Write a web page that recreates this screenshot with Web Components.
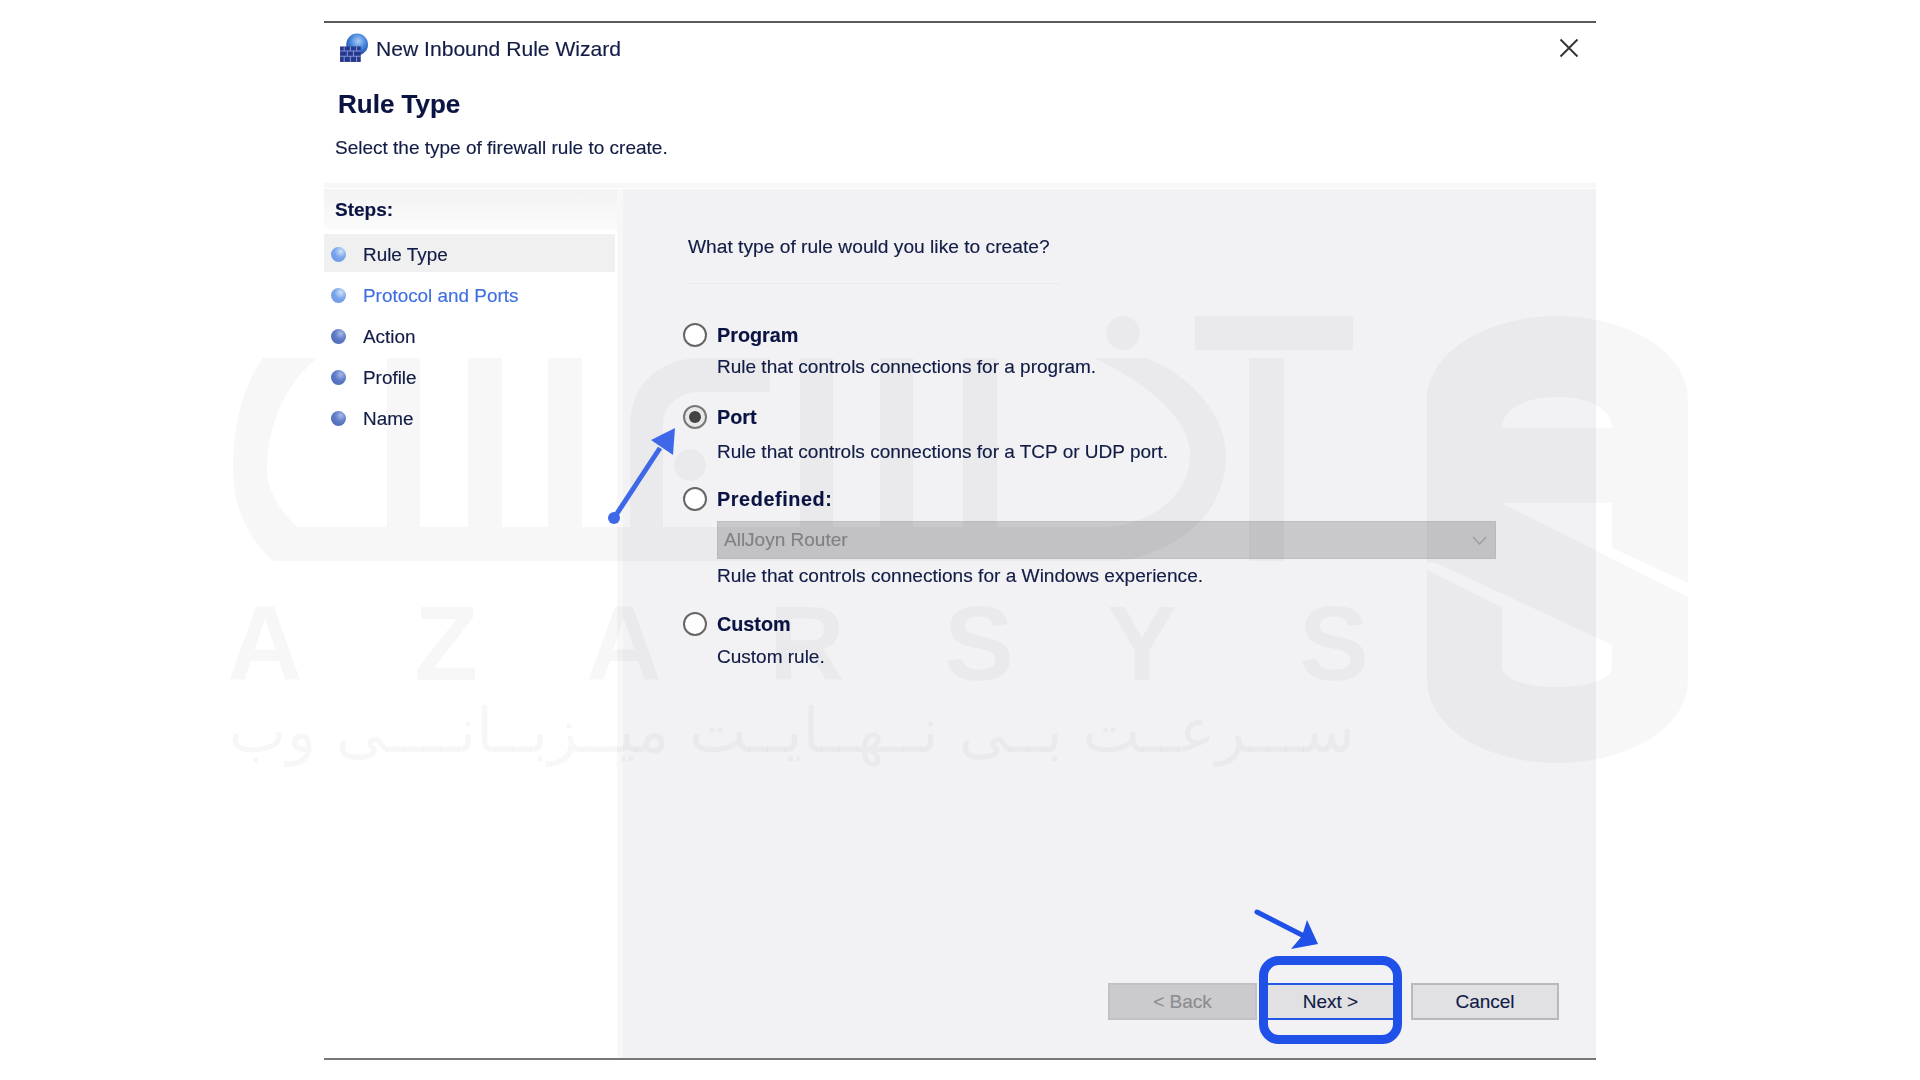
<!DOCTYPE html>
<html lang="en">
<head>
<meta charset="utf-8">
<title>New Inbound Rule Wizard</title>
<style>
  html, body { margin: 0; padding: 0; background: #fff; }
  body { width: 1920px; height: 1080px; overflow: hidden; position: relative; font-family: "Liberation Sans", Arial, sans-serif; }
</style>
</head>
<body>
<wizard-window>
  <wizard-title slot="title">New Inbound Rule Wizard</wizard-title>
  <wizard-head slot="head" heading="Rule Type">Select the type of firewall rule to create.</wizard-head>
  <wizard-steps slot="steps">
    <wizard-step state="current">Rule Type</wizard-step>
    <wizard-step state="next">Protocol and Ports</wizard-step>
    <wizard-step>Action</wizard-step>
    <wizard-step>Profile</wizard-step>
    <wizard-step>Name</wizard-step>
  </wizard-steps>
  <wizard-pane slot="pane" question="What type of rule would you like to create?">
    <rule-option label="Program" style="--desc-gap:8px">Rule that controls connections for a program.</rule-option>
    <rule-option label="Port" checked style="margin-top:26px;--desc-gap:11px">Rule that controls connections for a TCP or UDP port.</rule-option>
    <rule-option label="Predefined:" style="margin-top:23px;--desc-gap:5px;--label-ls:.6px;--desc-size:19.1px"><rule-select slot="control">AllJoyn Router</rule-select><span>Rule that controls connections for a Windows experience.</span></rule-option>
    <rule-option label="Custom" style="margin-top:24px;--desc-gap:9px">Custom rule.</rule-option>
    <wizard-button slot="footer" disabled style="width:149px">&lt; Back</wizard-button>
    <wizard-button slot="footer" highlight style="width:141px;margin-left:3px">Next &gt;</wizard-button>
    <wizard-button slot="footer" style="width:148px;margin-left:10px">Cancel</wizard-button>
  </wizard-pane>
</wizard-window>
<brand-watermark></brand-watermark>
<call-arrows></call-arrows>
<script>
const define = (tag, css, markup) => {
  class Component extends HTMLElement {
    constructor() {
      super();
      this.dom = this.attachShadow({ mode: "open" });
      const html = typeof markup === "function" ? markup(this) : markup;
      this.dom.innerHTML = `<style>${css}</style>${html}`;
    }
  }
  window.customElements.define(tag, Component);
};

const ink = "#121c46";

define("wizard-window", `
  :host { display: flex; flex-direction: column; width: 1272px; height: 1039px; margin: 21px auto 0; box-sizing: border-box;
    border-top: 2px solid #5a5a5a; border-bottom: 2px solid #777; color: ${ink}; filter: blur(.4px); -webkit-text-stroke: .15px currentColor; }
  .body { flex: 1; display: flex; min-height: 0; }
`, `
  <slot name="title"></slot>
  <slot name="head"></slot>
  <div class="body"><slot name="steps"></slot><slot name="pane"></slot></div>
`);

define("wizard-title", `
  :host { display: flex; align-items: center; height: 52px; padding: 0 0 0 15px; font-size: 21.1px; position: relative; }
  svg.icon { width: 29px; height: 30px; margin-right: 8px; margin-top: -2px; }
  svg.close { position: absolute; left: 1235px; top: 15px; width: 20px; height: 20px; }
`, `
  <svg class="icon" viewBox="0 0 28 29">
    <defs>
      <radialGradient id="globe" cx=".55" cy=".35" r=".7">
        <stop offset="0" stop-color="#a9cdf7"/><stop offset=".55" stop-color="#3f7fd8"/><stop offset="1" stop-color="#1d3f9a"/>
      </radialGradient>
    </defs>
    <circle cx="17.5" cy="11" r="10.5" fill="url(#globe)"/>
    <rect x="1" y="13" width="20" height="15" fill="#27388c"/>
    <path d="M1 17.5H21M1 22.5H21M5 13V17.5M11 13V17.5M17 13V17.5M8 17.5V22.5M14 17.5V22.5M5 22.5V28M11 22.5V28M17 22.5V28" stroke="#7f93d8" stroke-width="1" fill="none"/>
  </svg>
  <slot></slot>
  <svg class="close" viewBox="0 0 20 20"><path d="M1.5 1.5L18.5 18.5M18.5 1.5L1.5 18.5" stroke="#333" stroke-width="1.9" fill="none"/></svg>
`);

define("wizard-head", `
  :host { display: block; height: 113px; box-sizing: border-box; padding: 14px 0 0 11px; border-bottom: 5px solid #f7f7f7; margin-bottom: 1px; }
  h1 { margin: 0 0 0 3px; font-size: 26px; line-height: 30px; font-weight: bold; color: #0a1342; }
  p { margin: 17px 0 0; font-size: 19px; line-height: 24px; }
`, el => `
  <h1>${el.getAttribute("heading")}</h1>
  <p><slot></slot></p>
`);

define("wizard-steps", `
  :host { display: block; width: 293px; flex: none; }
  .hd { height: 40px; line-height: 41px; padding-left: 11px; font-weight: bold; font-size: 19px; color: #0a1342;
    background: linear-gradient(#f3f3f3, #fbfbfb); }
  .list { display: flex; flex-direction: column; gap: 3px; margin-top: 5px; }
`, `
  <div class="hd">Steps:</div>
  <div class="list"><slot></slot></div>
`);

define("wizard-step", `
  :host { display: flex; align-items: center; box-sizing: border-box; height: 38px; padding: 3px 0 0 7px; font-size: 18.9px; width: 291px; }
  :host([state="current"]) { background: #f0f0f0; }
  :host([state="next"]) { color: #3f6ee0; }
  i { width: 15px; height: 15px; border-radius: 50%; margin-right: 17px; flex: none;
    background: radial-gradient(circle at 65% 30%, #a9b9e6 0, #5f7cc9 42%, #4560ae 100%); }
  :host([state]) i { background: radial-gradient(circle at 65% 30%, #d4e2f7 0, #76a3ea 45%, #6b96e2 100%); }
`, `<i></i><slot></slot>`);

define("wizard-pane", `
  :host { flex: 1; display: flex; flex-direction: column; box-sizing: border-box; border-left: 6px solid #f7f7f7; padding: 46px 37px 38px 60px; background: #f2f2f4; min-width: 0; }
  .q { font-size: 19.2px; line-height: 24px; margin-left: 5px; }
  .rule { height: 1px; width: 372px; margin: 24px 0 39px 5px; background: #ebebed; }
  .foot { margin-top: auto; display: flex; justify-content: flex-end; }
`, el => `
  <div class="q">${el.getAttribute("question")}</div>
  <div class="rule"></div>
  <slot></slot>
  <div class="foot"><slot name="footer"></slot></div>
`);

define("rule-option", `
  :host { display: grid; grid-template-columns: 34px 1fr; font-size: 19px; }
  .radio { width: 24px; height: 24px; box-sizing: border-box; border: 2px solid #666; border-radius: 50%; background: #fff; display: flex; align-items: center; justify-content: center; }
  :host([checked]) .radio { background: #e8e8e8; border-color: #777; }
  :host([checked]) .radio::after { content: ""; width: 12px; height: 12px; border-radius: 50%; background: #444; }
  .label { line-height: 24px; font-weight: bold; color: #0a1342; font-size: 19.8px; letter-spacing: var(--label-ls, 0); }
  .rest { grid-column: 2; }
  .desc { line-height: 24px; margin-top: var(--desc-gap, 8px); font-size: var(--desc-size, 19px); }
`, el => `
  <div class="radio"></div>
  <div class="label">${el.getAttribute("label")}</div>
  <div class="rest">
    <slot name="control"></slot>
    <div class="desc"><slot></slot></div>
  </div>
`);

define("rule-select", `
  :host { display: flex; align-items: center; justify-content: space-between; height: 38px; width: 779px; box-sizing: border-box; margin-top: 10px;
    background: #c9c8ca; border: 1px solid #bfbec0; padding: 0 8px 0 6px; color: #85858a; font-size: 19px; }
  svg { width: 15px; height: 9px; }
`, `
  <slot></slot>
  <svg viewBox="0 0 15 9"><path d="M1 1L7.5 8L14 1" fill="none" stroke="#a5a5a8" stroke-width="1.6"/></svg>
`);

define("wizard-button", `
  :host { display: block; height: 37px; position: relative; box-sizing: border-box; flex: none; text-align: center; line-height: 33px; font-size: 19px;
    background: #e1e1e3; border: 2px solid #b9b9bb; }
  :host([disabled]) { background: #cbcacc; border-color: #c2c1c3; color: #8c8c91; }
  :host([highlight]) { border-width: 2px 0; border-color: #2457e6; }
  :host([highlight]) .ring { position: absolute; left: -1px; right: -1px; top: -29px; bottom: -26px; border: 9px solid #1f50e8; border-radius: 20px; }
`, el => `<slot></slot>${el.hasAttribute("highlight") ? '<div class="ring"></div>' : ""}`);

define("brand-watermark", `
  :host { position: absolute; left: 0; top: 0; width: 1920px; height: 1080px; pointer-events: none; }
  svg { display: block; }
  .latin { font-family: "Liberation Sans", sans-serif; font-weight: bold; font-size: 105px; }
  .fa { font-family: "DejaVu Sans", sans-serif; font-size: 61.5px; }
`, `
  <svg width="1920" height="1080" viewBox="0 0 1920 1080" fill="#000" fill-opacity=".03">
    <!-- logotype -->
    <path d="M263 358C243 385 233 425 233 470C233 510 250 540 273 561H1120C1185 550 1226 510 1226 455C1226 415 1190 375 1147 358H1094C1150 385 1190 420 1190 455C1190 495 1150 527 1100 527H997V358H963V527H913V358H880V527H833V358H800V527H663V425C663 405 680 392 700 392H770V358H700C660 358 630 385 630 425V527H582V358H548V527H502V358H468V527H420V358H387V527H297C280 510 267 490 267 470C267 425 285 385 317 358Z"/>
    <circle cx="690" cy="465" r="16"/>
    <circle cx="1123" cy="333" r="17"/>
    <rect x="1195" y="316" width="158" height="34"/>
    <rect x="1249" y="358" width="35" height="203"/>
    <!-- shield mark -->
    <path fill-rule="evenodd" d="M1427 400C1427 350 1490 316 1557 316C1625 316 1688 350 1688 400V680C1688 730 1625 763 1557 763C1490 763 1427 730 1427 680ZM1502 428H1612C1612 410 1590 397 1557 397C1525 397 1502 410 1502 428ZM1502 503H1612V548L1688 583V597ZM1427 563H1436L1612 645V667C1612 678 1590 687 1557 687C1525 687 1502 678 1502 667V607L1427 570Z"/>
    <text class="latin" x="227 414 586 769 944 1107 1299" y="680">AZARSYS</text>
    <text class="fa" x="1355" y="752" direction="rtl" text-anchor="start">ســـرعــت بــی نــهــایــت میــزبــانــــی وب</text>
  </svg>
`);

define("call-arrows", `
  :host { position: absolute; left: 0; top: 0; width: 1920px; height: 1080px; pointer-events: none; }
`, `
  <svg width="1920" height="1080" viewBox="0 0 1920 1080">
    <path d="M614 518L660 448" stroke="#3f68e8" stroke-width="5" fill="none"/>
    <circle cx="614" cy="518" r="6" fill="#3f68e8"/>
    <path d="M675 428L651 440L673 455Z" fill="#3f68e8"/>
    <path d="M1257 912L1302 935" stroke="#1f50e8" stroke-width="5" stroke-linecap="round" fill="none"/>
    <path d="M1318 944L1307 920L1302 936L1291 949Z" fill="#1f50e8"/>
  </svg>
`);
</script>
</body>
</html>
